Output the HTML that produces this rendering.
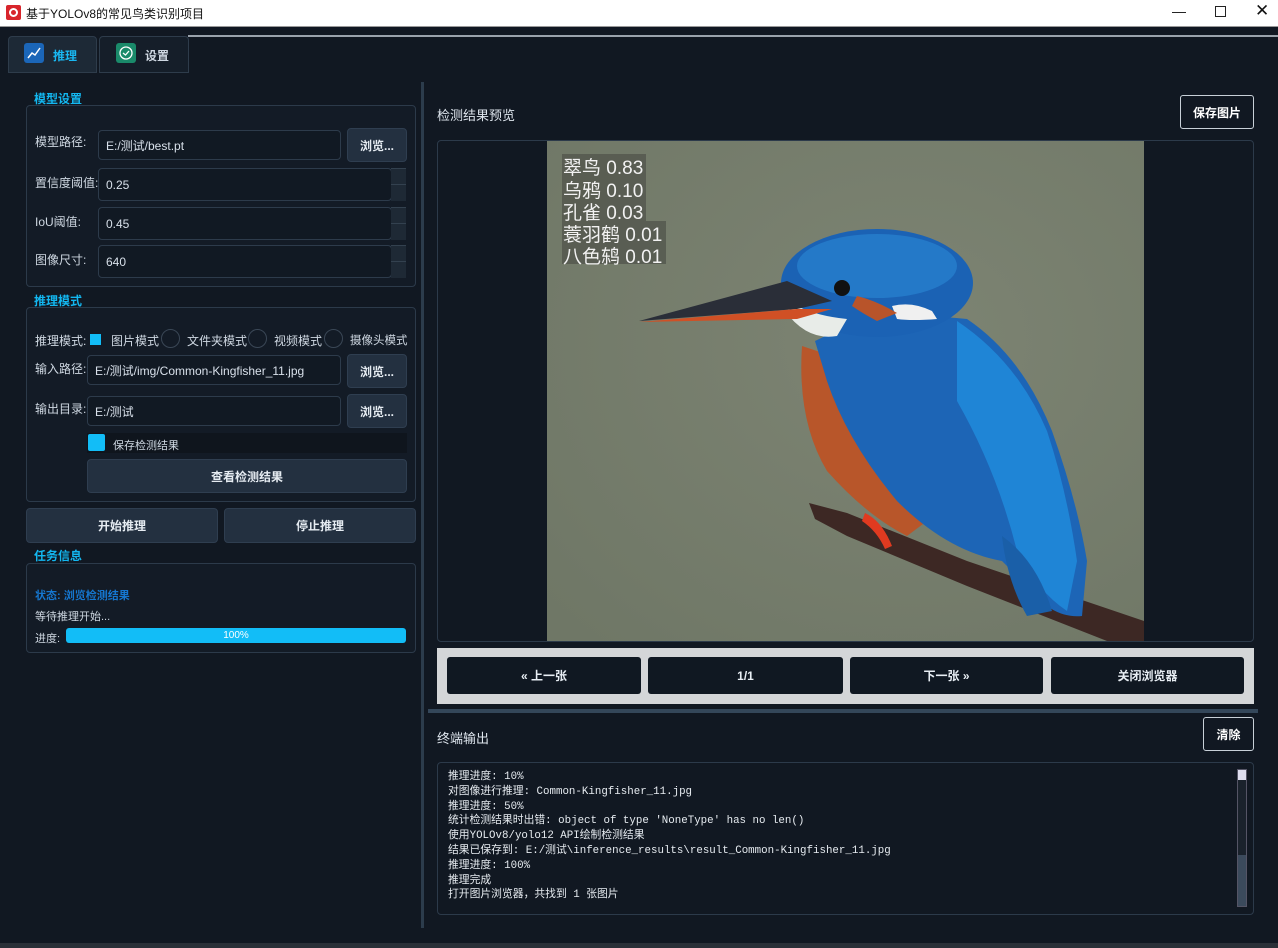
<!DOCTYPE html>
<html><head><meta charset="utf-8"><style>
*{box-sizing:border-box;margin:0;padding:0}
body{width:1278px;height:948px;background:#111822;font-family:"Liberation Sans","Noto Sans CJK SC",sans-serif;font-size:12px;color:#dfe6ee;position:relative;overflow:hidden}
.a{position:absolute}
.title{left:0;top:0;width:1278px;height:27px;background:#fff;border-bottom:1px solid #999;color:#111;font-size:12px}
.box{position:absolute;border:1px solid #2c3a4a;border-radius:4px;background:#131b26}
.lbl{position:absolute;color:#cfd8e2;font-size:12px}
.grp{position:absolute;color:#13b7f0;font-weight:bold;font-size:12px}
.inp{position:absolute;background:#111923;border:1px solid #2d3b4b;border-radius:4px;color:#d8e0ea;font-size:12px;padding-left:7px;display:flex;align-items:center}
.btn{position:absolute;background:#233040;border:1px solid #2f3e50;border-radius:4px;color:#e6ecf2;font-weight:bold;font-size:12px;display:flex;align-items:center;justify-content:center}
.spin{position:absolute;width:15px;background:#1e2935;border-top:1px solid #33414f}
.nb{position:absolute;top:657px;height:37px;background:#101822;border-radius:3px;color:#e8eef4;font-weight:bold;font-size:12px;display:flex;align-items:center;justify-content:center}
.term{position:absolute;left:448px;top:770px;font-family:"Liberation Mono","Noto Sans CJK SC",monospace;font-size:10.8px;line-height:14.8px;color:#e6ebf0;white-space:pre}
</style></head><body>
<div class="a title">
 <div class="a" style="left:6px;top:5px;width:15px;height:15px;background:#d8252c;border-radius:2px"><div class="a" style="left:3px;top:3px;width:9px;height:9px;border:2px solid #fff;border-radius:50%"></div></div>
 <div class="a" style="left:26px;top:5px">基于YOLOv8的常见鸟类识别项目</div>
 <div class="a" style="left:1172px;top:3px;font-size:14px">—</div>
 <div class="a" style="left:1215px;top:6px;width:11px;height:11px;border:1px solid #222"></div>
 <div class="a" style="left:1255px;top:1px;font-size:17px">✕</div>
</div>
<div class="a" style="left:188px;top:35px;width:1090px;height:2px;background:#9aa3ac"></div>
<div class="a" style="left:8px;top:36px;width:89px;height:37px;background:#1d2936;border:1px solid #2e3c4b;border-radius:4px 4px 0 0"></div>
<div class="a" style="left:24px;top:43px;width:20px;height:20px;background:#1b66b8;border-radius:3px"><svg width="20" height="20"><path d="M4 15 L8 10 L11 12 L16 5" stroke="#fff" stroke-width="1.5" fill="none"/></svg></div>
<div class="a" style="left:53px;top:47px;color:#19b8f2;font-weight:bold">推理</div>
<div class="a" style="left:99px;top:36px;width:90px;height:37px;background:#151e29;border:1px solid #2e3c4b;border-radius:4px 4px 0 0"></div>
<div class="a" style="left:116px;top:43px;width:20px;height:20px;background:#1a8a6a;border-radius:3px"><svg width="20" height="20"><circle cx="10" cy="10" r="6" stroke="#fff" stroke-width="1.3" fill="none"/><path d="M7 10 L9.5 12 L13 8" stroke="#fff" stroke-width="1.3" fill="none"/></svg></div>
<div class="a" style="left:145px;top:47px;color:#cfd8e2;font-weight:bold">设置</div>

<div class="a" style="left:421px;top:82px;width:3px;height:846px;background:#2c3c4c"></div>

<div class="grp" style="left:34px;top:90px">模型设置</div>
<div class="box" style="left:26px;top:105px;width:390px;height:182px"></div>
<div class="lbl" style="left:35px;top:133px">模型路径:</div>
<div class="inp" style="left:98px;top:130px;width:243px;height:30px">E:/测试/best.pt</div>
<div class="btn" style="left:347px;top:128px;width:60px;height:34px">浏览...</div>
<div class="lbl" style="left:35px;top:174px">置信度阈值:</div>
<div class="inp" style="left:98px;top:168px;width:294px;height:33px">0.25</div>
<div class="spin" style="left:391px;top:168px;height:16px"></div><div class="spin" style="left:391px;top:184px;height:17px"></div>
<div class="lbl" style="left:35px;top:213px">IoU阈值:</div>
<div class="inp" style="left:98px;top:207px;width:294px;height:33px">0.45</div>
<div class="spin" style="left:391px;top:207px;height:16px"></div><div class="spin" style="left:391px;top:223px;height:17px"></div>
<div class="lbl" style="left:35px;top:251px">图像尺寸:</div>
<div class="inp" style="left:98px;top:245px;width:294px;height:33px">640</div>
<div class="spin" style="left:391px;top:245px;height:16px"></div><div class="spin" style="left:391px;top:261px;height:17px"></div>

<div class="grp" style="left:34px;top:292px">推理模式</div>
<div class="box" style="left:26px;top:307px;width:390px;height:195px"></div>
<div class="lbl" style="left:35px;top:332px">推理模式:</div>
<div class="a" style="left:90px;top:334px;width:11px;height:11px;background:#12bdf7"></div>
<div class="lbl" style="left:111px;top:332px">图片模式</div>
<div class="a" style="left:161px;top:329px;width:19px;height:19px;border:1px solid #3a4756;border-radius:50%"></div>
<div class="lbl" style="left:187px;top:332px">文件夹模式</div>
<div class="a" style="left:248px;top:329px;width:19px;height:19px;border:1px solid #3a4756;border-radius:50%"></div>
<div class="lbl" style="left:274px;top:332px">视频模式</div>
<div class="a" style="left:324px;top:329px;width:19px;height:19px;border:1px solid #3a4756;border-radius:50%"></div>
<div class="lbl" style="left:350px;top:332px;font-size:11.5px">摄像头模式</div>
<div class="lbl" style="left:35px;top:360px">输入路径:</div>
<div class="inp" style="left:87px;top:355px;width:254px;height:30px">E:/测试/img/Common-Kingfisher_11.jpg</div>
<div class="btn" style="left:347px;top:354px;width:60px;height:34px">浏览...</div>
<div class="lbl" style="left:35px;top:400px">输出目录:</div>
<div class="inp" style="left:87px;top:396px;width:254px;height:30px">E:/测试</div>
<div class="btn" style="left:347px;top:394px;width:60px;height:34px">浏览...</div>
<div class="a" style="left:87px;top:433px;width:320px;height:20px;background:#0f151d"></div>
<div class="a" style="left:88px;top:434px;width:17px;height:17px;background:#12bdf7;border-radius:2px"></div>
<div class="lbl" style="left:113px;top:437px;font-size:11px">保存检测结果</div>
<div class="btn" style="left:87px;top:459px;width:320px;height:34px">查看检测结果</div>
<div class="btn" style="left:26px;top:508px;width:192px;height:35px">开始推理</div>
<div class="btn" style="left:224px;top:508px;width:192px;height:35px">停止推理</div>

<div class="grp" style="left:34px;top:547px">任务信息</div>
<div class="box" style="left:26px;top:563px;width:390px;height:90px"></div>
<div class="a" style="left:35px;top:587px;color:#1577d0;font-weight:bold;font-size:11px">状态: 浏览检测结果</div>
<div class="lbl" style="left:35px;top:608px;font-size:11px">等待推理开始...</div>
<div class="lbl" style="left:35px;top:630px;font-size:11px">进度:</div>
<div class="a" style="left:66px;top:628px;width:340px;height:15px;background:#12bdf7;border-radius:3px;color:#fff;font-size:10px;text-align:center;line-height:15px">100%</div>

<div class="a" style="left:437px;top:105px;font-size:13px;color:#dfe6ee">检测结果预览</div>
<div class="a" style="left:1180px;top:95px;width:74px;height:34px;border:1px solid #c8d0d8;border-radius:3px;background:#111822;color:#fff;font-weight:bold;display:flex;align-items:center;justify-content:center">保存图片</div>
<div class="box" style="left:437px;top:140px;width:817px;height:502px;background:#111822"></div>
<svg class="a" style="left:547px;top:141px" width="597" height="500" viewBox="0 0 597 500">
<defs><radialGradient id="bg" cx="0.6" cy="0.4" r="0.8"><stop offset="0" stop-color="#7d8473"/><stop offset="1" stop-color="#6f7766"/></radialGradient></defs>
<rect width="597" height="500" fill="url(#bg)"/>
<path d="M262 362 L300 372 L420 420 L597 480 L597 500 L560 500 L420 445 L300 395 L268 378Z" fill="#3d2824"/>
<path d="M255 205 Q250 280 280 330 Q320 375 360 395 L380 380 Q330 320 300 220Z" fill="#b8562a"/>
<path d="M268 200 Q330 168 420 178 Q475 215 505 290 Q530 360 540 420 L535 475 Q505 478 480 445 L455 420 Q400 410 350 360 Q300 300 280 240Z" fill="#1d65b6"/>
<path d="M410 180 Q470 220 500 290 Q520 350 530 420 L520 470 Q490 450 470 410 Q450 330 410 260Z" fill="#1f85d6"/>
<path d="M455 395 Q490 420 505 470 L480 475 Q460 440 455 395Z" fill="#1a5fa8"/>
<ellipse cx="330" cy="142" rx="96" ry="54" fill="#1b62b4"/>
<ellipse cx="330" cy="125" rx="80" ry="32" fill="#2479c8"/>
<path d="M238 170 Q260 200 290 195 L300 178 Q270 175 250 165Z" fill="#e8ece8"/>
<path d="M345 165 Q365 160 385 170 L390 178 Q365 180 350 178Z" fill="#f0f0f0"/>
<path d="M310 155 Q330 160 350 172 L330 180 Q315 172 305 165Z" fill="#b8542a"/>
<path d="M92 180 L240 140 L285 160 L250 168Z" fill="#2a2e38"/>
<path d="M92 181 L250 168 L285 168 L250 178Z" fill="#d05025"/>
<circle cx="295" cy="147" r="8" fill="#111"/>
<path d="M318 372 Q335 380 345 405 L338 408 Q330 390 315 380Z" fill="#e03a20"/>
<rect x="15" y="13" width="84" height="110" fill="#55584f" opacity=".85"/>
<rect x="99" y="80" width="20" height="43" fill="#55584f" opacity=".85"/>
<g font-family="Liberation Sans,Noto Sans CJK SC,sans-serif" font-size="19" fill="#f2f2f2">
<text x="16" y="33">翠鸟 0.83</text><text x="16" y="56">乌鸦 0.10</text><text x="16" y="78">孔雀 0.03</text><text x="16" y="100">蓑羽鹤 0.01</text><text x="16" y="122">八色鸫 0.01</text></g>
</svg>
<div class="a" style="left:437px;top:648px;width:817px;height:56px;background:#d4d6d8"></div>
<div class="nb" style="left:447px;width:194px">« 上一张</div>
<div class="nb" style="left:648px;width:195px">1/1</div>
<div class="nb" style="left:850px;width:193px">下一张 »</div>
<div class="nb" style="left:1051px;width:193px">关闭浏览器</div>
<div class="a" style="left:428px;top:709px;width:830px;height:4px;background:#34475a"></div>
<div class="a" style="left:437px;top:728px;font-size:13px">终端输出</div>
<div class="a" style="left:1203px;top:717px;width:51px;height:34px;border:1px solid #c8d0d8;border-radius:3px;color:#fff;font-weight:bold;display:flex;align-items:center;justify-content:center">清除</div>
<div class="box" style="left:437px;top:762px;width:817px;height:153px;background:#111822"></div>
<div class="term">推理进度: 10%
对图像进行推理: Common-Kingfisher_11.jpg
推理进度: 50%
统计检测结果时出错: object of type 'NoneType' has no len()
使用YOLOv8/yolo12 API绘制检测结果
结果已保存到: E:/测试\inference_results\result_Common-Kingfisher_11.jpg
推理进度: 100%
推理完成
打开图片浏览器，共找到 1 张图片</div>
<div class="a" style="left:1237px;top:769px;width:10px;height:138px;background:#1a222c;border:1px solid #556"></div>
<div class="a" style="left:1238px;top:855px;width:8px;height:51px;background:#3b4a5c"></div>
<div class="a" style="left:1238px;top:770px;width:8px;height:10px;background:#dde;"></div>
<div class="a" style="left:0;top:943px;width:1278px;height:5px;background:#2a3038"></div>
</body></html>
